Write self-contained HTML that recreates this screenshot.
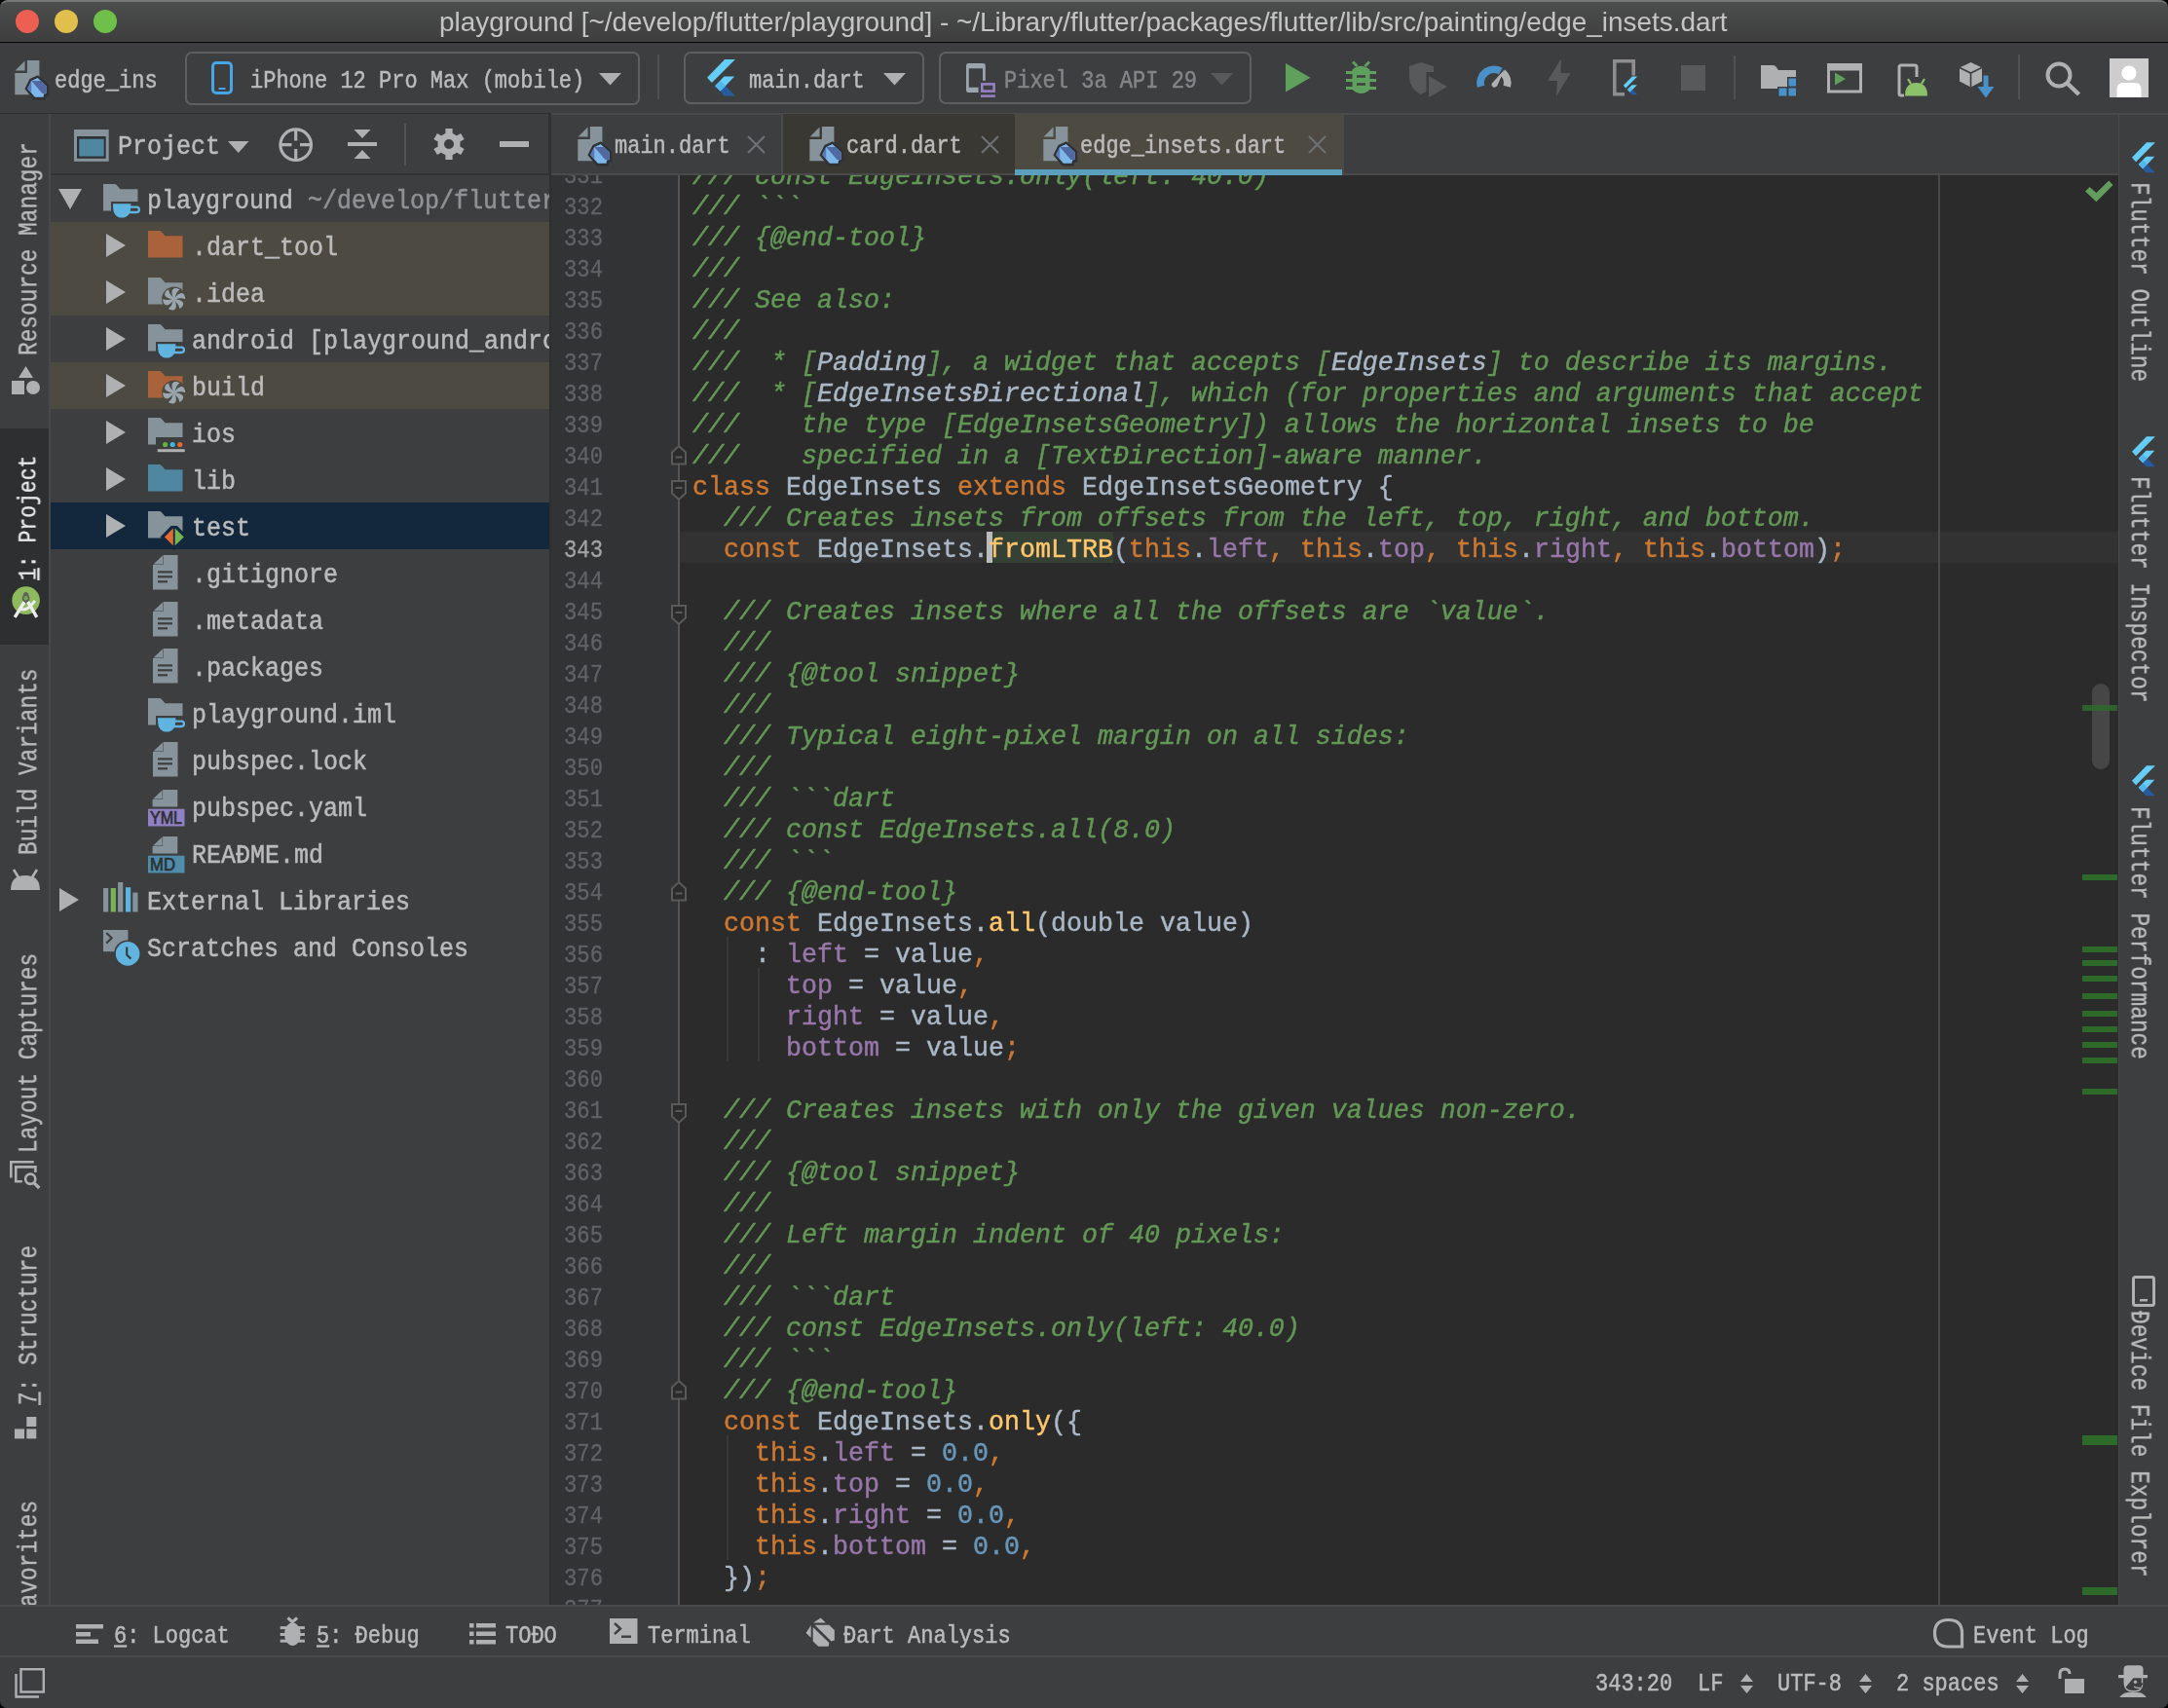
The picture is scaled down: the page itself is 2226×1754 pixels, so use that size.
<!DOCTYPE html>
<html><head><meta charset="utf-8">
<style>
*{margin:0;padding:0;box-sizing:border-box}
html,body{width:2226px;height:1754px;overflow:hidden;background:#000}
body{position:relative;font-family:"Liberation Mono",monospace;color:#BBBBBB}
.t,.cl,.ln,.vt{will-change:transform}
.a{position:absolute}
.t{position:absolute;white-space:pre;line-height:1}
svg{position:absolute;overflow:visible}
/* title */
#title{left:0;top:0;width:2226px;height:43px;background:linear-gradient(#4C4D4D,#3E3E3E);border-top:2px solid #767676;border-radius:8px 8px 0 0}
#titleline{left:0;top:42.5px;width:2226px;height:1.5px;background:#050505}
.tl{position:absolute;top:10px;width:24px;height:24px;border-radius:50%}
/* toolbar */
#toolbar{left:0;top:44px;width:2226px;height:72px;background:#3D3E40}
#tbline{left:0;top:116px;width:566px;height:2px;background:#2E2F31}
.combo{position:absolute;border:2px solid #5E6060;border-radius:7px}
.sep{position:absolute;width:2px;background:#515151}
/* strips */
#lstrip{left:0;top:117px;width:50px;height:1531px;background:#3D3E40}
#lstripb{left:50px;top:117px;width:2px;height:1531px;background:#47494B}
#rstrip{left:2175px;top:117px;width:51px;height:1531px;background:#3D3E40}
#rstripb{left:2174px;top:117px;width:2px;height:1531px;background:#47494B}
.vt{position:absolute;white-space:pre;font-size:22.8px;line-height:1;color:#BBBBBB;-webkit-text-stroke:0.3px currentColor}
/* project panel */
#proj{left:52px;top:117px;width:512px;height:1531px;background:#3D3E40;overflow:hidden}
#projhdr{left:0;top:0;width:512px;height:61px;background:#3D3E40}
#projhdrb{left:0;top:61px;width:512px;height:2px;background:#323232}
.row{position:absolute;left:0;width:512px;height:48px}
.row .t{font-size:25px;top:13px;color:#BBBBBB}
.tr{font-size:25px;color:#BBBBBB;transform-origin:0 19px;transform:scaleY(1.1);-webkit-text-stroke:0.5px currentColor}
/* editor */
#tabs{left:564px;top:117px;width:1611px;height:61px;background:#3D3E40}
#tabsb{left:566px;top:178px;width:1609px;height:2px;background:#4A4A4A}
#editor{left:564px;top:180px;width:1611px;height:1468px;background:#2B2B2B;overflow:hidden}
#gutter{left:0;top:0;width:133px;height:1468px;background:#313335}
#foldline{left:132px;top:0;width:2px;height:1468px;background:#555555}
.ln{position:absolute;left:15px;width:60px;font-size:22.2px;color:#606366;white-space:pre;line-height:1;transform-origin:0 16px;transform:scaleY(1.15);-webkit-text-stroke:0.3px currentColor}
.cl{position:absolute;left:147px;white-space:pre;font-size:26.667px;line-height:1;color:#A9B7C6;transform-origin:0 20px;transform:scaleY(1.04);-webkit-text-stroke:0.45px currentColor}
.c{color:#629755;font-style:italic}
.cr{color:#A9B7C6;font-style:italic}
.k{color:#CC7832}
.f{color:#FFC66D}
.p{color:#9876AA}
.n{color:#6897BB}
/* bottom */
#bstripb{left:0;top:1648px;width:2226px;height:2px;background:#47494B}
#bstrip{left:0;top:1650px;width:2226px;height:50px;background:#3D3E40}
#statusb{left:0;top:1700px;width:2226px;height:2px;background:#47494B}
#status{left:0;top:1702px;width:2226px;height:52px;background:#3D3E40;border-radius:0 0 7px 7px}
.ui{font-size:22px;color:#BBBBBB;transform-origin:0 16px;transform:scaleY(1.17);-webkit-text-stroke:0.45px currentColor}
</style></head>
<body>
<div id="title" class="a"></div>
<div id="titleline" class="a"></div>
<div class="tl" style="left:16px;background:#EE5F53"></div>
<div class="tl" style="left:56px;background:#E0BF4C"></div>
<div class="tl" style="left:96px;background:#6FBF4B"></div>
<div class="t" id="ttext" style="left:451px;top:9px;font-family:'Liberation Sans';font-size:27.9px;color:#C4C4C4">playground [~/develop/flutter/playground] - ~/Library/flutter/packages/flutter/lib/src/painting/edge_insets.dart</div>

<div id="toolbar" class="a"></div>
<div id="tbline" class="a"></div>
<!--TOOLBAR-->
<svg style="left:15px;top:62px" width="36" height="41" viewBox="0 0 36 41"><use href="#darticon"/></svg>
<div class="t ui" style="left:56px;top:74px">edge_ins</div>
<div class="combo" style="left:190px;top:53px;width:467px;height:55px"></div>
<svg style="left:217px;top:62.6px" width="22" height="34" viewBox="0 0 22 34"><rect x="1.5" y="1.5" width="19" height="31" rx="3.5" fill="none" stroke="#47A6E6" stroke-width="3"/><rect x="7.5" y="27" width="7" height="2" fill="#47A6E6"/></svg>
<div class="t ui" style="left:257px;top:74px">iPhone 12 Pro Max (mobile)</div>
<svg style="left:615px;top:74.6px" width="23" height="13" viewBox="0 0 23 13"><path d="M0 0H23L11.5 12.5Z" fill="#AEB0B2"/></svg>
<div class="sep" style="left:675px;top:56px;height:46px"></div>
<div class="combo" style="left:702px;top:53px;width:247px;height:54px"></div>
<svg style="left:726px;top:61px" width="29" height="38" viewBox="0 0 29 38"><use href="#fluttericon"/></svg>
<div class="t ui" style="left:769px;top:74px">main.dart</div>
<svg style="left:907px;top:74.6px" width="23" height="13" viewBox="0 0 23 13"><path d="M0 0H23L11.5 12.5Z" fill="#AEB0B2"/></svg>
<div class="combo" style="left:964px;top:53px;width:321px;height:54px"></div>
<svg style="left:992px;top:65px" width="31" height="36" viewBox="0 0 31 36"><path d="M12.6 30H2.5Q0 30 0 27.5V2.5Q0 0 2.5 0H17.3Q19.8 0 19.8 2.5V17.8H17V5.2H2.8V24.8H12.6Z" fill="#9AA5AD"/><rect x="16.3" y="21.4" width="12.3" height="7.2" fill="none" stroke="#9580C4" stroke-width="2.6"/><rect x="15" y="32.4" width="14.9" height="2.5" fill="#9580C4"/></svg>
<div class="t ui" style="left:1031px;top:74px;color:#838587">Pixel 3a API 29</div>
<svg style="left:1243px;top:74.6px" width="23" height="13" viewBox="0 0 23 13"><path d="M0 0H23L11.5 12.5Z" fill="#58595B"/></svg>
<svg style="left:1320px;top:65px" width="26" height="30" viewBox="0 0 26 30"><path d="M0 0L25.4 14.8L0 29.6Z" fill="#60A05D"/></svg>
<svg style="left:1382px;top:62.5px" width="31" height="35" viewBox="0 0 31 35"><path d="M7 0.5L11.5 5M24 0.5L19.5 5" stroke="#60A05D" stroke-width="3"/><path d="M6.5 8.5Q15.5 1 24.5 8.5V29Q15.5 37 6.5 29Z" fill="#60A05D"/><path d="M0 11.5H31M0 19.5H31M0 27.5H31" stroke="#60A05D" stroke-width="3"/><path d="M11 15.5H20M11 23.5H20" stroke="#3D3E40" stroke-width="2.6"/></svg>
<svg style="left:1447px;top:64px" width="39" height="37" viewBox="0 0 39 37"><path d="M0 4L12 0L25 4V10H17.5V30L12 33Q0 27 0 15Z" fill="#58595B"/><path d="M20 14L39 25L20 36Z" fill="#58595B"/></svg>
<svg style="left:1515px;top:67px" width="37" height="25" viewBox="0 0 37 25"><path d="M5.52 21.68A13.85 13.85 0 0 1 25.8 6.1" fill="none" stroke="#4A90C9" stroke-width="7.7"/><path d="M27.8 7.5A13.85 13.85 0 0 1 32.28 21.68" fill="none" stroke="#AEB0B2" stroke-width="7.7"/><path d="M16.5 19L29.5 4.5L22.3 21Q20.5 23.5 18 22.5Q16 21.5 16.5 19Z" fill="#AEB0B2"/></svg>
<svg style="left:1589px;top:60px" width="24" height="39" viewBox="0 0 24 39"><path d="M14 0L0 23H10L9 39L23.5 15H13.5Z" fill="#58595B"/></svg>
<svg style="left:1656px;top:61px" width="26" height="38" viewBox="0 0 26 38"><path d="M12 35.8H1.8V1.8H21.2V16.5" fill="none" stroke="#8E8E8E" stroke-width="3.6"/><g transform="translate(10.8 17.4) scale(0.5)"><use href="#fluttericon"/></g></svg>
<div class="a" style="left:1725.5px;top:67px;width:25.5px;height:26px;background:#58595B"></div>
<div class="sep" style="left:1780px;top:56.7px;height:45px"></div>
<svg style="left:1808px;top:67px" width="37" height="32" viewBox="0 0 37 32"><path d="M0 0H12Q14 0 15 1L18 5H36V12H27V22H17V24H0Z" fill="#AEB0B2"/><rect x="28.5" y="13.5" width="7.5" height="8" fill="#4A90C9"/><rect x="18.5" y="23.5" width="8" height="8" fill="#4A90C9"/><rect x="28.5" y="23.5" width="7.5" height="8" fill="#4A90C9"/><path d="M19 13H37" stroke="#3D3E40" stroke-width="0"/></svg>
<svg style="left:1876px;top:64.6px" width="37" height="31" viewBox="0 0 37 31"><rect x="1.5" y="1.5" width="33" height="27.5" fill="none" stroke="#AEB0B2" stroke-width="3"/><rect x="1.5" y="1.5" width="33" height="6" fill="#AEB0B2"/><path d="M8 9.5L19 16L8 22.5Z" fill="#60A05D"/></svg>
<svg style="left:1948px;top:64.6px" width="32" height="34" viewBox="0 0 32 34"><path d="M7 33H4Q2 33 2 31V4Q2 2 4 2H18Q20 2 20 4V14" fill="none" stroke="#AEB0B2" stroke-width="3"/><path d="M8 33.5Q8 20 19.5 20Q31 20 31 33.5Z" fill="#8BC269"/><path d="M11 16L14 21M28 16L25 21" stroke="#8BC269" stroke-width="2.2"/></svg>
<svg style="left:2012px;top:63.5px" width="39" height="37" viewBox="0 0 39 37"><path d="M11.5 0L23 5.5V19.5L11.5 25.5L0 19.5V5.5Z" fill="#AEB0B2"/><path d="M0 5.5L11.5 11L23 5.5M11.5 11V25.5" fill="none" stroke="#3D3E40" stroke-width="1.6"/><rect x="24.5" y="13.5" width="5" height="14" fill="#4A90C9"/><path d="M18.5 25H35.5L27 36.5Z" fill="#4A90C9"/></svg>
<div class="sep" style="left:2072px;top:56px;height:46px"></div>
<svg style="left:2100px;top:62.5px" width="37" height="36" viewBox="0 0 37 36"><circle cx="14" cy="14" r="11.5" fill="none" stroke="#AEB0B2" stroke-width="4"/><path d="M22 22L34.5 34" stroke="#AEB0B2" stroke-width="4.5"/></svg>
<svg style="left:2165.7px;top:59.8px" width="40" height="40" viewBox="0 0 40 40"><rect width="40" height="40" fill="#CDCDCD"/><circle cx="20" cy="15" r="7.6" fill="#FFFFFF"/><path d="M7.5 40V32Q7.5 25 14 25H26Q32.5 25 32.5 32V40Z" fill="#FFFFFF"/></svg>
<!--/TOOLBAR-->

<div id="lstrip" class="a"></div>
<div id="lstripb" class="a"></div>
<div id="rstrip" class="a"></div>
<div id="rstripb" class="a"></div>

<div id="proj" class="a">
  <div id="projhdr" class="a"></div>
  <div id="projhdrb" class="a"></div>
<!--HDR-->
<svg style="left:24px;top:16px" width="36" height="33" viewBox="0 0 36 33"><rect x="0" y="0" width="35.7" height="32.8" fill="#87939A"/><rect x="3" y="7" width="29.7" height="22.8" fill="#2E3235"/><rect x="5.3" y="9.7" width="25.4" height="17.8" fill="#4F87A0"/></svg>
<div class="t tr" style="left:69px;top:22px">Project</div>
<svg style="left:181.5px;top:28px" width="22" height="12" viewBox="0 0 22 12"><path d="M0 0H21.5L10.75 12Z" fill="#AEB0B2"/></svg>
<svg style="left:234px;top:13.6px" width="36" height="36" viewBox="0 0 36 36"><circle cx="17.7" cy="17.7" r="15.8" fill="none" stroke="#AEB0B2" stroke-width="3.2"/><path d="M17.7 2V13.5M17.7 22V33.5M2 17.7H13.5M22 17.7H33.5" stroke="#AEB0B2" stroke-width="3.2"/></svg>
<svg style="left:305px;top:16px" width="30" height="30" viewBox="0 0 30 30"><path d="M6.5 0H23.5L15 9Z M6.5 30H23.5L15 21Z" fill="#AEB0B2"/><rect x="0" y="13" width="30" height="4" fill="#AEB0B2"/></svg>
<div class="a" style="left:362.5px;top:9.6px;width:2px;height:43px;background:#515355"></div>
<svg style="left:392.6px;top:14.8px" width="32" height="32" viewBox="-16 -16 32 32"><g fill="#AEB0B2"><rect x="-3.6" y="-16" width="7.2" height="8" transform="rotate(0)"/><rect x="-3.6" y="-16" width="7.2" height="8" transform="rotate(60)"/><rect x="-3.6" y="-16" width="7.2" height="8" transform="rotate(120)"/><rect x="-3.6" y="-16" width="7.2" height="8" transform="rotate(180)"/><rect x="-3.6" y="-16" width="7.2" height="8" transform="rotate(240)"/><rect x="-3.6" y="-16" width="7.2" height="8" transform="rotate(300)"/><circle r="11.5"/></g><circle r="5" fill="#3D3E40"/></svg>
<div class="a" style="left:461px;top:28px;width:30px;height:6px;background:#AEB0B2"></div>
<!--/HDR-->
<!--PROJ-->
<svg style="left:8.0px;top:77.0px" width="24" height="21" viewBox="0 0 24 21"><path d="M0 0H24L12 21Z" fill="#AEB0B2"/></svg>
<svg style="left:54.0px;top:72.2px" width="38" height="36" viewBox="0 0 38 36"><path d="M0 0H11.5Q13 0 14 1.2L17.5 5.2H35.5V27.5H0Z" fill="#87939A"/><rect x="8" y="18" width="30" height="20" fill="#3D3E40"/><path d="M10 20.3H28.3V22Q28.3 34.6 19.15 34.6Q10 34.6 10 22Z" fill="#5FB4E0"/><path d="M26.5 23.6H34.3Q36.9 23.6 36.9 26.3Q36.9 29 34.3 29H26.5" fill="none" stroke="#5FB4E0" stroke-width="2.3"/></svg>
<div class="t tr" style="left:99px;top:78px">playground<span style="color:#8F9193"> ~/develop/flutter/playground</span></div>
<div class="a" style="left:0;top:111px;width:512px;height:48px;background:#4D4A42"></div>
<svg style="left:56.0px;top:123.0px" width="22" height="24" viewBox="0 0 22 24"><path d="M1 0L21 12L1 24Z" fill="#AEB0B2"/></svg>
<svg style="left:100.0px;top:120.0px" width="38" height="30" viewBox="0 0 38 30"><path d="M0 0H11.5Q13 0 14 1.2L17.5 5.2H35.5V27.5H0Z" fill="#AA623A"/></svg>
<div class="t tr" style="left:145px;top:126px">.dart_tool</div>
<div class="a" style="left:0;top:159px;width:512px;height:48px;background:#4D4A42"></div>
<svg style="left:56.0px;top:171.0px" width="22" height="24" viewBox="0 0 22 24"><path d="M1 0L21 12L1 24Z" fill="#AEB0B2"/></svg>
<svg style="left:100.0px;top:168.0px" width="38" height="36" viewBox="0 0 38 36"><path d="M0 0H11.5Q13 0 14 1.2L17.5 5.2H35.5V27.5H0Z" fill="#87939A"/><circle cx="26.7" cy="22.2" r="12.6" fill="#4D4A42"/><g transform="translate(26.7 22.2) scale(1.12)"><path d="M0 0C-2.5 -4 -2.5 -8.5 -0.5 -9.6C1.5 -10.5 4 -9.8 5.2 -8.7C3 -7.5 1.5 -5 0.8 -0.3Z" transform="rotate(0)" fill="#9AA7B0"/><path d="M0 0C-2.5 -4 -2.5 -8.5 -0.5 -9.6C1.5 -10.5 4 -9.8 5.2 -8.7C3 -7.5 1.5 -5 0.8 -0.3Z" transform="rotate(60)" fill="#9AA7B0"/><path d="M0 0C-2.5 -4 -2.5 -8.5 -0.5 -9.6C1.5 -10.5 4 -9.8 5.2 -8.7C3 -7.5 1.5 -5 0.8 -0.3Z" transform="rotate(120)" fill="#9AA7B0"/><path d="M0 0C-2.5 -4 -2.5 -8.5 -0.5 -9.6C1.5 -10.5 4 -9.8 5.2 -8.7C3 -7.5 1.5 -5 0.8 -0.3Z" transform="rotate(180)" fill="#9AA7B0"/><path d="M0 0C-2.5 -4 -2.5 -8.5 -0.5 -9.6C1.5 -10.5 4 -9.8 5.2 -8.7C3 -7.5 1.5 -5 0.8 -0.3Z" transform="rotate(240)" fill="#9AA7B0"/><path d="M0 0C-2.5 -4 -2.5 -8.5 -0.5 -9.6C1.5 -10.5 4 -9.8 5.2 -8.7C3 -7.5 1.5 -5 0.8 -0.3Z" transform="rotate(300)" fill="#9AA7B0"/></g></svg>
<div class="t tr" style="left:145px;top:174px">.idea</div>
<svg style="left:56.0px;top:219.0px" width="22" height="24" viewBox="0 0 22 24"><path d="M1 0L21 12L1 24Z" fill="#AEB0B2"/></svg>
<svg style="left:100.0px;top:216.2px" width="38" height="36" viewBox="0 0 38 36"><path d="M0 0H11.5Q13 0 14 1.2L17.5 5.2H35.5V27.5H0Z" fill="#87939A"/><rect x="8" y="18" width="30" height="20" fill="#3D3E40"/><path d="M10 20.3H28.3V22Q28.3 34.6 19.15 34.6Q10 34.6 10 22Z" fill="#5FB4E0"/><path d="M26.5 23.6H34.3Q36.9 23.6 36.9 26.3Q36.9 29 34.3 29H26.5" fill="none" stroke="#5FB4E0" stroke-width="2.3"/></svg>
<div class="t tr" style="left:145px;top:222px">android [playground_android]</div>
<div class="a" style="left:0;top:255px;width:512px;height:48px;background:#4D4A42"></div>
<svg style="left:56.0px;top:267.0px" width="22" height="24" viewBox="0 0 22 24"><path d="M1 0L21 12L1 24Z" fill="#AEB0B2"/></svg>
<svg style="left:100.0px;top:264.0px" width="38" height="36" viewBox="0 0 38 36"><path d="M0 0H11.5Q13 0 14 1.2L17.5 5.2H35.5V27.5H0Z" fill="#AA623A"/><circle cx="26.7" cy="22.2" r="12.6" fill="#4D4A42"/><g transform="translate(26.7 22.2) scale(1.12)"><path d="M0 0C-2.5 -4 -2.5 -8.5 -0.5 -9.6C1.5 -10.5 4 -9.8 5.2 -8.7C3 -7.5 1.5 -5 0.8 -0.3Z" transform="rotate(0)" fill="#9AA7B0"/><path d="M0 0C-2.5 -4 -2.5 -8.5 -0.5 -9.6C1.5 -10.5 4 -9.8 5.2 -8.7C3 -7.5 1.5 -5 0.8 -0.3Z" transform="rotate(60)" fill="#9AA7B0"/><path d="M0 0C-2.5 -4 -2.5 -8.5 -0.5 -9.6C1.5 -10.5 4 -9.8 5.2 -8.7C3 -7.5 1.5 -5 0.8 -0.3Z" transform="rotate(120)" fill="#9AA7B0"/><path d="M0 0C-2.5 -4 -2.5 -8.5 -0.5 -9.6C1.5 -10.5 4 -9.8 5.2 -8.7C3 -7.5 1.5 -5 0.8 -0.3Z" transform="rotate(180)" fill="#9AA7B0"/><path d="M0 0C-2.5 -4 -2.5 -8.5 -0.5 -9.6C1.5 -10.5 4 -9.8 5.2 -8.7C3 -7.5 1.5 -5 0.8 -0.3Z" transform="rotate(240)" fill="#9AA7B0"/><path d="M0 0C-2.5 -4 -2.5 -8.5 -0.5 -9.6C1.5 -10.5 4 -9.8 5.2 -8.7C3 -7.5 1.5 -5 0.8 -0.3Z" transform="rotate(300)" fill="#9AA7B0"/></g></svg>
<div class="t tr" style="left:145px;top:270px">build</div>
<svg style="left:56.0px;top:315.0px" width="22" height="24" viewBox="0 0 22 24"><path d="M1 0L21 12L1 24Z" fill="#AEB0B2"/></svg>
<svg style="left:100.0px;top:312.0px" width="38" height="36" viewBox="0 0 38 36"><path d="M0 0H11.5Q13 0 14 1.2L17.5 5.2H35.5V27.5H0Z" fill="#87939A"/><path d="M8 20H38V30H8Z" fill="#3D3E40"/><circle cx="17.6" cy="27.5" r="2.6" fill="#62B543"/><circle cx="25.2" cy="27.5" r="2.6" fill="#40B6E0"/><circle cx="32.8" cy="27.5" r="2.6" fill="#E46A2C"/><rect x="9.7" y="32.2" width="28" height="3" fill="#AEB0B2"/></svg>
<div class="t tr" style="left:145px;top:318px">ios</div>
<svg style="left:56.0px;top:363.0px" width="22" height="24" viewBox="0 0 22 24"><path d="M1 0L21 12L1 24Z" fill="#AEB0B2"/></svg>
<svg style="left:100.0px;top:360.0px" width="38" height="30" viewBox="0 0 38 30"><path d="M0 0H11.5Q13 0 14 1.2L17.5 5.2H35.5V27.5H0Z" fill="#4F87A0"/></svg>
<div class="t tr" style="left:145px;top:366px">lib</div>
<div class="a" style="left:0;top:399px;width:512px;height:48px;background:#13283D"></div>
<svg style="left:56.0px;top:411.0px" width="22" height="24" viewBox="0 0 22 24"><path d="M1 0L21 12L1 24Z" fill="#AEB0B2"/></svg>
<svg style="left:100.0px;top:408.0px" width="38" height="38" viewBox="0 0 38 38"><path d="M0 0H11.5Q13 0 14 1.2L17.5 5.2H35.5V27.5H0Z" fill="#87939A"/><path d="M12.5 26.4L23.6 15H29.9L41 26.4L26.75 40Z" fill="#13283D"/><path d="M16.9 26.4L25.8 17.5V35.3Z" fill="#E46A34"/><path d="M27.7 17.5L36.8 26.4L27.7 35.3Z" fill="#75B553"/></svg>
<div class="t tr" style="left:145px;top:414px">test</div>
<svg style="left:105.0px;top:453.0px" width="26" height="36" viewBox="0 0 26 36"><path d="M10.5 0H25.5V35.5H0V10H10.5Z" fill="#87939A"/><path d="M0.5 9.5L10 0.5V9.5Z" fill="#87939A"/><path d="M12 8.5H10.5V11.5H0V10" fill="none"/><rect x="5" y="16.3" width="15" height="2.2" fill="#3D3E40"/><rect x="5" y="21.2" width="15" height="2.2" fill="#3D3E40"/><rect x="5" y="26.2" width="10" height="2.2" fill="#3D3E40"/></svg>
<div class="t tr" style="left:145px;top:462px">.gitignore</div>
<svg style="left:105.0px;top:501.0px" width="26" height="36" viewBox="0 0 26 36"><path d="M10.5 0H25.5V35.5H0V10H10.5Z" fill="#87939A"/><path d="M0.5 9.5L10 0.5V9.5Z" fill="#87939A"/><path d="M12 8.5H10.5V11.5H0V10" fill="none"/><rect x="5" y="16.3" width="15" height="2.2" fill="#3D3E40"/><rect x="5" y="21.2" width="15" height="2.2" fill="#3D3E40"/><rect x="5" y="26.2" width="10" height="2.2" fill="#3D3E40"/></svg>
<div class="t tr" style="left:145px;top:510px">.metadata</div>
<svg style="left:105.0px;top:549.0px" width="26" height="36" viewBox="0 0 26 36"><path d="M10.5 0H25.5V35.5H0V10H10.5Z" fill="#87939A"/><path d="M0.5 9.5L10 0.5V9.5Z" fill="#87939A"/><path d="M12 8.5H10.5V11.5H0V10" fill="none"/><rect x="5" y="16.3" width="15" height="2.2" fill="#3D3E40"/><rect x="5" y="21.2" width="15" height="2.2" fill="#3D3E40"/><rect x="5" y="26.2" width="10" height="2.2" fill="#3D3E40"/></svg>
<div class="t tr" style="left:145px;top:558px">.packages</div>
<svg style="left:100.0px;top:600.2px" width="38" height="36" viewBox="0 0 38 36"><path d="M0 0H11.5Q13 0 14 1.2L17.5 5.2H35.5V27.5H0Z" fill="#87939A"/><rect x="8" y="18" width="30" height="20" fill="#3D3E40"/><path d="M10 20.3H28.3V22Q28.3 34.6 19.15 34.6Q10 34.6 10 22Z" fill="#5FB4E0"/><path d="M26.5 23.6H34.3Q36.9 23.6 36.9 26.3Q36.9 29 34.3 29H26.5" fill="none" stroke="#5FB4E0" stroke-width="2.3"/></svg>
<div class="t tr" style="left:145px;top:606px">playground.iml</div>
<svg style="left:105.0px;top:645.0px" width="26" height="36" viewBox="0 0 26 36"><path d="M10.5 0H25.5V35.5H0V10H10.5Z" fill="#87939A"/><path d="M0.5 9.5L10 0.5V9.5Z" fill="#87939A"/><path d="M12 8.5H10.5V11.5H0V10" fill="none"/><rect x="5" y="16.3" width="15" height="2.2" fill="#3D3E40"/><rect x="5" y="21.2" width="15" height="2.2" fill="#3D3E40"/><rect x="5" y="26.2" width="10" height="2.2" fill="#3D3E40"/></svg>
<div class="t tr" style="left:145px;top:654px">pubspec.lock</div>
<svg style="left:100.4px;top:693.5px" width="38" height="38" viewBox="0 0 38 38"><path d="M15.1 0H30.3V17.4H4.6V10H15.1Z" fill="#87939A"/><path d="M5.1 9.5L14.6 0.5V9.5Z" fill="#87939A"/><rect x="0" y="19.7" width="37.5" height="17.8" fill="#9280C4"/><text x="2" y="34.6" font-family="Liberation Sans" font-size="17.5" fill="#2E3135" stroke="#2E3135" stroke-width="0.7" textLength="33" lengthAdjust="spacingAndGlyphs">YML</text></svg>
<div class="t tr" style="left:145px;top:702px">pubspec.yaml</div>
<svg style="left:100.4px;top:741.5px" width="38" height="38" viewBox="0 0 38 38"><path d="M15.1 0H30.3V17.4H4.6V10H15.1Z" fill="#87939A"/><path d="M5.1 9.5L14.6 0.5V9.5Z" fill="#87939A"/><rect x="0" y="19.7" width="37.5" height="17.8" fill="#4F8BAA"/><text x="2" y="34.6" font-family="Liberation Sans" font-size="17.5" fill="#2E3135" stroke="#2E3135" stroke-width="0.7" textLength="26" lengthAdjust="spacingAndGlyphs">MD</text></svg>
<div class="t tr" style="left:145px;top:750px">REAĐME.md</div>
<svg style="left:8.0px;top:795.0px" width="22" height="24" viewBox="0 0 22 24"><path d="M1 0L21 12L1 24Z" fill="#AEB0B2"/></svg>
<svg style="left:54.0px;top:789.0px" width="36" height="31" viewBox="0 0 36 31"><rect x="0" y="6" width="5.2" height="24.5" fill="#87939A"/><rect x="7.7" y="6" width="5.2" height="24.5" fill="#76B455"/><rect x="15.1" y="0" width="5.2" height="30.5" fill="#87939A"/><rect x="23" y="5.2" width="5.2" height="25.3" fill="#5AB5E3"/><rect x="30.3" y="10.6" width="5.2" height="19.9" fill="#87939A"/></svg>
<div class="t tr" style="left:99px;top:798px">External Libraries</div>
<svg style="left:54.0px;top:837.6px" width="40" height="40" viewBox="0 0 40 40"><rect x="0" y="0" width="25.4" height="22.2" fill="#87939A"/><path d="M3.2 3L8.7 8.3L3.2 13.6" fill="none" stroke="#3D3E40" stroke-width="2.2"/><circle cx="25.1" cy="24.4" r="14" fill="#3D3E40"/><circle cx="25.1" cy="24.4" r="12.3" fill="#5FB4E0"/><path d="M24.2 17.5V25.5L28.4 29.6" fill="none" stroke="#3D3E40" stroke-width="2.2"/></svg>
<div class="t tr" style="left:99px;top:846px">Scratches and Consoles</div>
<!--/PROJ-->
</div>

<div id="tabs" class="a"></div>
<div id="tabsb" class="a"></div>
<div id="editor" class="a">
  <div id="gutter" class="a"></div>
  <div id="foldline" class="a"></div>
<div class="a" style="left:134px;top:366px;width:1477px;height:32px;background:#323232"></div>
<div class="a" style="left:455px;top:366px;width:124px;height:32px;background:#344134"></div>
<div class="a" style="left:449px;top:366px;width:6px;height:32px;background:#BBBBBB"></div>
<div class="a" style="left:1426px;top:0;width:2px;height:1468px;background:#4A4A4A"></div>
<div class="a" style="left:182px;top:782px;width:2px;height:128px;background:#393939"></div>
<div class="a" style="left:214px;top:814px;width:2px;height:96px;background:#393939"></div>
<div class="a" style="left:182px;top:1294px;width:2px;height:128px;background:#393939"></div>
<!--FOLDS-->
<svg style="left:125px;top:277px" width="16" height="21" viewBox="0 0 16 21"><path d="M8 1L15 7.5V19.5H1V7.5Z" fill="#2B2B2B" stroke="#5A5A5A" stroke-width="2"/><rect x="4.5" y="11.5" width="7" height="2" fill="#5A5A5A"/></svg>
<svg style="left:125px;top:313px" width="16" height="21" viewBox="0 0 16 21"><path d="M1 1H15V13.5L8 20L1 13.5Z" fill="#2B2B2B" stroke="#5A5A5A" stroke-width="2"/><rect x="4.5" y="7" width="7" height="2" fill="#5A5A5A"/></svg>
<svg style="left:125px;top:441px" width="16" height="21" viewBox="0 0 16 21"><path d="M1 1H15V13.5L8 20L1 13.5Z" fill="#2B2B2B" stroke="#5A5A5A" stroke-width="2"/><rect x="4.5" y="7" width="7" height="2" fill="#5A5A5A"/></svg>
<svg style="left:125px;top:725px" width="16" height="21" viewBox="0 0 16 21"><path d="M8 1L15 7.5V19.5H1V7.5Z" fill="#2B2B2B" stroke="#5A5A5A" stroke-width="2"/><rect x="4.5" y="11.5" width="7" height="2" fill="#5A5A5A"/></svg>
<svg style="left:125px;top:953px" width="16" height="21" viewBox="0 0 16 21"><path d="M1 1H15V13.5L8 20L1 13.5Z" fill="#2B2B2B" stroke="#5A5A5A" stroke-width="2"/><rect x="4.5" y="7" width="7" height="2" fill="#5A5A5A"/></svg>
<svg style="left:125px;top:1237px" width="16" height="21" viewBox="0 0 16 21"><path d="M8 1L15 7.5V19.5H1V7.5Z" fill="#2B2B2B" stroke="#5A5A5A" stroke-width="2"/><rect x="4.5" y="11.5" width="7" height="2" fill="#5A5A5A"/></svg>
<!--/FOLDS-->
<!--CODE-->
<div class="cl" style="top:-11.00px"><span class="c">/// const EdgeInsets.only(left: 40.0)</span></div>
<div class="ln" style="top:-8.00px">331</div>
<div class="cl" style="top:20.00px"><span class="c">/// ```</span></div>
<div class="ln" style="top:24.00px">332</div>
<div class="cl" style="top:52.00px"><span class="c">/// {@end-tool}</span></div>
<div class="ln" style="top:56.00px">333</div>
<div class="cl" style="top:84.00px"><span class="c">///</span></div>
<div class="ln" style="top:88.00px">334</div>
<div class="cl" style="top:116.00px"><span class="c">/// See also:</span></div>
<div class="ln" style="top:120.00px">335</div>
<div class="cl" style="top:148.00px"><span class="c">///</span></div>
<div class="ln" style="top:152.00px">336</div>
<div class="cl" style="top:180.00px"><span class="c">///  * [</span><span class="cr">Padding</span><span class="c">], a widget that accepts [</span><span class="cr">EdgeInsets</span><span class="c">] to describe its margins.</span></div>
<div class="ln" style="top:184.00px">337</div>
<div class="cl" style="top:212.00px"><span class="c">///  * [</span><span class="cr">EdgeInsetsĐirectional</span><span class="c">], which (for properties and arguments that accept</span></div>
<div class="ln" style="top:216.00px">338</div>
<div class="cl" style="top:244.00px"><span class="c">///    the type [EdgeInsetsGeometry]) allows the horizontal insets to be</span></div>
<div class="ln" style="top:248.00px">339</div>
<div class="cl" style="top:276.00px"><span class="c">///    specified in a [TextĐirection]-aware manner.</span></div>
<div class="ln" style="top:280.00px">340</div>
<div class="cl" style="top:308.00px"><span class="k">class</span> EdgeInsets <span class="k">extends</span> EdgeInsetsGeometry {</div>
<div class="ln" style="top:312.00px">341</div>
<div class="cl" style="top:340.00px">  <span class="c">/// Creates insets from offsets from the left, top, right, and bottom.</span></div>
<div class="ln" style="top:344.00px">342</div>
<div class="cl" style="top:372.00px">  <span class="k">const</span> EdgeInsets.<span class="f">fromLTRB</span>(<span class="k">this</span>.<span class="p">left</span><span class="k">,</span> <span class="k">this</span>.<span class="p">top</span><span class="k">,</span> <span class="k">this</span>.<span class="p">right</span><span class="k">,</span> <span class="k">this</span>.<span class="p">bottom</span>)<span class="k">;</span></div>
<div class="ln" style="top:376.00px;color:#A4A3A3">343</div>
<div class="ln" style="top:408.00px">344</div>
<div class="cl" style="top:436.00px">  <span class="c">/// Creates insets where all the offsets are `value`.</span></div>
<div class="ln" style="top:440.00px">345</div>
<div class="cl" style="top:468.00px">  <span class="c">///</span></div>
<div class="ln" style="top:472.00px">346</div>
<div class="cl" style="top:500.00px">  <span class="c">/// {@tool snippet}</span></div>
<div class="ln" style="top:504.00px">347</div>
<div class="cl" style="top:532.00px">  <span class="c">///</span></div>
<div class="ln" style="top:536.00px">348</div>
<div class="cl" style="top:564.00px">  <span class="c">/// Typical eight-pixel margin on all sides:</span></div>
<div class="ln" style="top:568.00px">349</div>
<div class="cl" style="top:596.00px">  <span class="c">///</span></div>
<div class="ln" style="top:600.00px">350</div>
<div class="cl" style="top:628.00px">  <span class="c">/// ```dart</span></div>
<div class="ln" style="top:632.00px">351</div>
<div class="cl" style="top:660.00px">  <span class="c">/// const EdgeInsets.all(8.0)</span></div>
<div class="ln" style="top:664.00px">352</div>
<div class="cl" style="top:692.00px">  <span class="c">/// ```</span></div>
<div class="ln" style="top:696.00px">353</div>
<div class="cl" style="top:724.00px">  <span class="c">/// {@end-tool}</span></div>
<div class="ln" style="top:728.00px">354</div>
<div class="cl" style="top:756.00px">  <span class="k">const</span> EdgeInsets.<span class="f">all</span>(double value)</div>
<div class="ln" style="top:760.00px">355</div>
<div class="cl" style="top:788.00px">    : <span class="p">left</span> = value<span class="k">,</span></div>
<div class="ln" style="top:792.00px">356</div>
<div class="cl" style="top:820.00px">      <span class="p">top</span> = value<span class="k">,</span></div>
<div class="ln" style="top:824.00px">357</div>
<div class="cl" style="top:852.00px">      <span class="p">right</span> = value<span class="k">,</span></div>
<div class="ln" style="top:856.00px">358</div>
<div class="cl" style="top:884.00px">      <span class="p">bottom</span> = value<span class="k">;</span></div>
<div class="ln" style="top:888.00px">359</div>
<div class="ln" style="top:920.00px">360</div>
<div class="cl" style="top:948.00px">  <span class="c">/// Creates insets with only the given values non-zero.</span></div>
<div class="ln" style="top:952.00px">361</div>
<div class="cl" style="top:980.00px">  <span class="c">///</span></div>
<div class="ln" style="top:984.00px">362</div>
<div class="cl" style="top:1012.00px">  <span class="c">/// {@tool snippet}</span></div>
<div class="ln" style="top:1016.00px">363</div>
<div class="cl" style="top:1044.00px">  <span class="c">///</span></div>
<div class="ln" style="top:1048.00px">364</div>
<div class="cl" style="top:1076.00px">  <span class="c">/// Left margin indent of 40 pixels:</span></div>
<div class="ln" style="top:1080.00px">365</div>
<div class="cl" style="top:1108.00px">  <span class="c">///</span></div>
<div class="ln" style="top:1112.00px">366</div>
<div class="cl" style="top:1140.00px">  <span class="c">/// ```dart</span></div>
<div class="ln" style="top:1144.00px">367</div>
<div class="cl" style="top:1172.00px">  <span class="c">/// const EdgeInsets.only(left: 40.0)</span></div>
<div class="ln" style="top:1176.00px">368</div>
<div class="cl" style="top:1204.00px">  <span class="c">/// ```</span></div>
<div class="ln" style="top:1208.00px">369</div>
<div class="cl" style="top:1236.00px">  <span class="c">/// {@end-tool}</span></div>
<div class="ln" style="top:1240.00px">370</div>
<div class="cl" style="top:1268.00px">  <span class="k">const</span> EdgeInsets.<span class="f">only</span>({</div>
<div class="ln" style="top:1272.00px">371</div>
<div class="cl" style="top:1300.00px">    <span class="k">this</span>.<span class="p">left</span> = <span class="n">0.0</span><span class="k">,</span></div>
<div class="ln" style="top:1304.00px">372</div>
<div class="cl" style="top:1332.00px">    <span class="k">this</span>.<span class="p">top</span> = <span class="n">0.0</span><span class="k">,</span></div>
<div class="ln" style="top:1336.00px">373</div>
<div class="cl" style="top:1364.00px">    <span class="k">this</span>.<span class="p">right</span> = <span class="n">0.0</span><span class="k">,</span></div>
<div class="ln" style="top:1368.00px">374</div>
<div class="cl" style="top:1396.00px">    <span class="k">this</span>.<span class="p">bottom</span> = <span class="n">0.0</span><span class="k">,</span></div>
<div class="ln" style="top:1400.00px">375</div>
<div class="cl" style="top:1428.00px">  })<span class="k">;</span></div>
<div class="ln" style="top:1432.00px">376</div>
<div class="ln" style="top:1464.00px">377</div>
<!--/CODE-->
</div>

<div id="bstripb" class="a"></div>
<div id="bstrip" class="a"></div>
<div id="statusb" class="a"></div>
<div id="status" class="a"></div>
<!--TABS-->
<div class="a" style="left:566px;top:116px;width:1660px;height:2px;background:#4A4A4A"></div>
<div class="a" style="left:563px;top:117px;width:3px;height:63px;background:#2F3133"></div>
<div class="a" style="left:564px;top:180px;width:2px;height:1468px;background:#2F2F30"></div>
<div class="a" style="left:802px;top:117px;width:2px;height:61px;background:#4A4A4A"></div>
<div class="a" style="left:804px;top:117px;width:238px;height:61px;background:#393833"></div>
<div class="a" style="left:1042px;top:117px;width:338px;height:61px;background:#4D4A42"></div>
<div class="a" style="left:1378px;top:117px;width:2px;height:61px;background:#4A4A4A"></div>
<div class="a" style="left:1042px;top:174px;width:336px;height:6px;background:#5A9FBE"></div>
<svg style="left:593px;top:130px" width="36" height="41" viewBox="0 0 36 41"><use href="#darticon"/></svg>
<div class="t ui" style="left:631px;top:141px">main.dart</div>
<svg style="left:767px;top:139px" width="19" height="19" viewBox="0 0 19 19"><path d="M1 1L18 18M18 1L1 18" stroke="#6E7173" stroke-width="2.2"/></svg>
<svg style="left:831px;top:130px" width="36" height="41" viewBox="0 0 36 41"><use href="#darticon"/></svg>
<div class="t ui" style="left:869px;top:141px">card.dart</div>
<svg style="left:1007px;top:139px" width="19" height="19" viewBox="0 0 19 19"><path d="M1 1L18 18M18 1L1 18" stroke="#6E7173" stroke-width="2.2"/></svg>
<svg style="left:1071px;top:130px" width="36" height="41" viewBox="0 0 36 41"><use href="#darticon"/></svg>
<div class="t ui" style="left:1109px;top:141px">edge_insets.dart</div>
<svg style="left:1343px;top:139px" width="19" height="19" viewBox="0 0 19 19"><path d="M1 1L18 18M18 1L1 18" stroke="#6E7173" stroke-width="2.2"/></svg>
<!--/TABS-->
<!--EDX-->
<svg style="left:2141px;top:185px" width="30" height="23" viewBox="0 0 30 23"><path d="M0 11.4L11.4 22.2L28.6 4.9L24.2 0.5L11.4 13.1L4.5 6.9Z" fill="#629D5E"/></svg>
<div class="a" style="left:2148px;top:702px;width:18px;height:88px;border-radius:9px;background:rgba(255,255,255,0.13)"></div>
<div class="a" style="left:2138px;top:724px;width:36px;height:6px;background:#2E6A2A;opacity:.85"></div>
<div class="a" style="left:2138px;top:898px;width:36px;height:6px;background:#2E6A2A"></div>
<div class="a" style="left:2138px;top:972px;width:36px;height:6px;background:#2E6A2A"></div>
<div class="a" style="left:2138px;top:986px;width:36px;height:6px;background:#2E6A2A"></div>
<div class="a" style="left:2138px;top:1002px;width:36px;height:6px;background:#2E6A2A"></div>
<div class="a" style="left:2138px;top:1020px;width:36px;height:6px;background:#2E6A2A"></div>
<div class="a" style="left:2138px;top:1038px;width:36px;height:6px;background:#2E6A2A"></div>
<div class="a" style="left:2138px;top:1054px;width:36px;height:6px;background:#2E6A2A"></div>
<div class="a" style="left:2138px;top:1070px;width:36px;height:6px;background:#2E6A2A"></div>
<div class="a" style="left:2138px;top:1086px;width:36px;height:6px;background:#2E6A2A"></div>
<div class="a" style="left:2138px;top:1118px;width:36px;height:6px;background:#2E6A2A"></div>
<div class="a" style="left:2138px;top:1474px;width:36px;height:10px;background:#2E6A2A"></div>
<div class="a" style="left:2138px;top:1630px;width:36px;height:8px;background:#2E6A2A"></div>
<!--/EDX-->
<!--LSTRIP-->
<div class="a" style="left:0;top:117px;width:50px;height:1531px;overflow:hidden">
<div class="a" style="left:0;top:323px;width:50px;height:222px;background:#2D2F31"></div>
<div class="vt" style="left:20px;top:248px;transform-origin:0 0;transform:rotate(-90deg) translateY(16.5px) scaleY(1.2) translateY(-16.5px)">Resource Manager</div>
<svg style="left:12px;top:259px" width="29" height="30" viewBox="0 0 29 30"><path d="M14.5 0L22 12H7Z" fill="#AEB0B2"/><rect x="0" y="15" width="13" height="14" fill="#AEB0B2"/><circle cx="22" cy="22" r="7" fill="#AEB0B2"/></svg>
<div class="vt" style="left:20px;top:479px;font-size:21.4px;transform-origin:0 0;transform:rotate(-90deg) translateY(16.5px) scaleY(1.2) translateY(-16.5px);color:#E8E8E8"><span style="text-decoration:underline">1</span>: Project</div>
<svg style="left:12px;top:485px" width="30" height="34" viewBox="0 0 30 34"><circle cx="14.6" cy="14.6" r="14.3" fill="#8DBA5C"/><path d="M13.2 15.8L3.2 31.9M16.6 15.8L25.8 31.9" stroke="#EDEDED" stroke-width="3.4"/><path d="M9.4 23.4Q15.5 26.5 23.9 14.8" fill="none" stroke="#EDEDED" stroke-width="3"/><path d="M12.5 7.2Q14.6 5 16.7 7.2L18.4 11.5V14.3L14.6 17.6L10.8 14.3V11.5Z" fill="#5E5F60"/><circle cx="14.6" cy="12.3" r="2.2" fill="#7AA650"/></svg>
<div class="vt" style="left:20px;top:761px;transform-origin:0 0;transform:rotate(-90deg) translateY(16.5px) scaleY(1.2) translateY(-16.5px)">Build Variants</div>
<svg style="left:10px;top:776px" width="32" height="21" viewBox="0 0 32 21"><path d="M1 21Q1 6 16 6Q31 6 31 21Z" fill="#AEB0B2"/><path d="M4 0L9 8M28 0L23 8" stroke="#AEB0B2" stroke-width="2.6"/></svg>
<div class="vt" style="left:20px;top:1067px;transform-origin:0 0;transform:rotate(-90deg) translateY(16.5px) scaleY(1.2) translateY(-16.5px)">Layout Captures</div>
<svg style="left:0;top:1063px" width="50" height="50" viewBox="0 0 50 50"><g fill="none" stroke="#AEB0B2"><path d="M11.3 29.6V13.3H34.8" stroke-width="2.6"/><path d="M22.8 33.2H16.25V18.35H36.4V24" stroke-width="2.6"/><circle cx="31.2" cy="30.7" r="5.1" stroke-width="2.7"/><path d="M34.6 34.4L40.3 40" stroke-width="3.3"/></g></svg>
<div class="vt" style="left:20px;top:1326px;transform-origin:0 0;transform:rotate(-90deg) translateY(16.5px) scaleY(1.2) translateY(-16.5px)"><span style="text-decoration:underline">7</span>: Structure</div>
<svg style="left:15px;top:1338px" width="24" height="24" viewBox="0 0 24 24"><rect x="0" y="12.4" width="10" height="10" fill="#AEB0B2"/><rect x="12.3" y="12.4" width="10" height="10" fill="#AEB0B2"/><rect x="12.3" y="0" width="10" height="10" fill="#AEB0B2"/></svg>
<div class="vt" style="left:20px;top:1588px;transform-origin:0 0;transform:rotate(-90deg) translateY(16.5px) scaleY(1.2) translateY(-16.5px)">2: Favorites</div>
</div>
<!--/LSTRIP-->
<!--RSTRIP-->
<svg style="left:2189px;top:146px" width="24" height="32" viewBox="0 0 29 38"><use href="#fluttericon"/></svg>
<div class="vt" style="left:2206px;top:187px;transform-origin:0 0;transform:rotate(90deg) translateY(16.5px) scaleY(1.2) translateY(-16.5px)">Flutter Outline</div>
<svg style="left:2189px;top:448px" width="24" height="32" viewBox="0 0 29 38"><use href="#fluttericon"/></svg>
<div class="vt" style="left:2206px;top:489px;transform-origin:0 0;transform:rotate(90deg) translateY(16.5px) scaleY(1.2) translateY(-16.5px)">Flutter Inspector</div>
<svg style="left:2189px;top:786px" width="24" height="32" viewBox="0 0 29 38"><use href="#fluttericon"/></svg>
<div class="vt" style="left:2206px;top:828px;transform-origin:0 0;transform:rotate(90deg) translateY(16.5px) scaleY(1.2) translateY(-16.5px)">Flutter Performance</div>
<svg style="left:2189px;top:1310px" width="24" height="32" viewBox="0 0 24 32"><rect x="1.5" y="1.5" width="21" height="29" rx="2" fill="none" stroke="#AEB0B2" stroke-width="3"/><rect x="8" y="24" width="8" height="2.5" fill="#AEB0B2"/></svg>
<div class="vt" style="left:2206px;top:1346px;transform-origin:0 0;transform:rotate(90deg) translateY(16.5px) scaleY(1.2) translateY(-16.5px)">Đevice File Explorer</div>
<!--/RSTRIP-->
<!--BOTTOM-->
<svg style="left:78px;top:1667.5px" width="28" height="20" viewBox="0 0 28 20"><rect x="0" y="0" width="28" height="4.5" fill="#AEB0B2"/><rect x="0" y="8" width="15" height="4.5" fill="#AEB0B2"/><rect x="0" y="15.5" width="23" height="4.5" fill="#AEB0B2"/></svg>
<div class="t ui" style="left:117px;top:1671px"><span style="text-decoration:underline">6</span>: Logcat</div>
<svg style="left:286px;top:1660px" width="28" height="31" viewBox="0 0 28 31"><g fill="#AEB0B2"><path d="M9.5 1.4L14.3 5.8L19.1 1.4" fill="none" stroke="#AEB0B2" stroke-width="3.2"/><ellipse cx="14.4" cy="18.2" rx="8.3" ry="11.8"/><rect x="1.7" y="10.1" width="25.2" height="3"/><rect x="1.7" y="17" width="25.2" height="3"/><rect x="1.7" y="23.7" width="25.2" height="3"/></g></svg>
<div class="t ui" style="left:325px;top:1671px"><span style="text-decoration:underline">5</span>: Đebug</div>
<svg style="left:482px;top:1667px" width="27" height="22" viewBox="0 0 27 22"><g fill="#AEB0B2"><rect x="0" y="0" width="4.5" height="4.5"/><rect x="7" y="0" width="20" height="4.5"/><rect x="0" y="8.5" width="4.5" height="4.5"/><rect x="7" y="8.5" width="20" height="4.5"/><rect x="0" y="17" width="4.5" height="4.5"/><rect x="7" y="17" width="20" height="4.5"/></g></svg>
<div class="t ui" style="left:519px;top:1671px">TOĐO</div>
<svg style="left:626px;top:1662px" width="29" height="26" viewBox="0 0 29 26"><rect width="28.5" height="26" fill="#AEB0B2"/><path d="M5 5L11 10.5L5 16" fill="none" stroke="#3D3E40" stroke-width="2.4"/><rect x="12" y="17.5" width="10" height="2.4" fill="#3D3E40"/></svg>
<div class="t ui" style="left:665px;top:1671px">Terminal</div>
<svg style="left:826px;top:1660px" width="32" height="32" viewBox="0 0 32 32"><g fill="#AEB0B2"><path d="M8.9 6.6L16.7 1.6L21.9 6.6Z"/><path d="M6.7 9.1L1.5 16.9L6.7 21.8Z"/><path d="M8.7 11.1L25.3 27.1L24.7 30.7H14.2L8.7 25.4Z"/><path d="M10.6 8.8H25.3L30.8 14.1V24.6L27.5 25.4Z"/></g></svg>
<div class="t ui" style="left:866px;top:1671px">Đart Analysis</div>
<svg style="left:1984px;top:1660.6px" width="33" height="32" viewBox="0 0 33 32"><path d="M30.5 30H16Q2.5 30 2.5 16Q2.5 2.5 16.5 2.5Q30.5 2.5 30.5 16Z" fill="none" stroke="#AEB0B2" stroke-width="3.2"/></svg>
<div class="t ui" style="left:2026px;top:1671px">Event Log</div>
<svg style="left:15px;top:1713px" width="31" height="31" viewBox="0 0 31 31"><path d="M1.5 6V29.5H25" fill="none" stroke="#AEB0B2" stroke-width="2.4"/><rect x="6.5" y="1.2" width="23.3" height="23.3" fill="none" stroke="#AEB0B2" stroke-width="2.4"/></svg>
<div class="t ui" style="left:1638px;top:1720px">343:20</div>
<div class="t ui" style="left:1743px;top:1720px">LF</div>
<svg style="left:1787px;top:1718.5px" width="13" height="20" viewBox="0 0 13 20"><path d="M0 8H13L6.5 0Z M0 12H13L6.5 20Z" fill="#AEB0B2"/></svg>
<div class="t ui" style="left:1825px;top:1720px">UTF-8</div>
<svg style="left:1908.7px;top:1718.5px" width="13" height="20" viewBox="0 0 13 20"><path d="M0 8H13L6.5 0Z M0 12H13L6.5 20Z" fill="#AEB0B2"/></svg>
<div class="t ui" style="left:1947px;top:1720px">2 spaces</div>
<svg style="left:2070px;top:1718.5px" width="13" height="20" viewBox="0 0 13 20"><path d="M0 8H13L6.5 0Z M0 12H13L6.5 20Z" fill="#AEB0B2"/></svg>
<svg style="left:2112px;top:1711.5px" width="29" height="27" viewBox="0 0 29 27"><path d="M3 12V7Q3 2 8 2Q13 2 13 7" fill="none" stroke="#AEB0B2" stroke-width="3"/><rect x="8" y="12" width="20" height="15" fill="#AEB0B2"/></svg>
<svg style="left:2175px;top:1710px" width="31" height="33" viewBox="0 0 31 33"><g fill="#AEB0B2"><path d="M5.5 13V4.3Q5.5 0.3 9.5 0.3H21.5Q25.5 0.3 25.5 4.3V13Z"/><rect x="0" y="10" width="30" height="3.2"/><path d="M5.5 13V18Q5.5 27.8 15.2 27.8Q25.2 27.8 25.2 20V13Z"/><path d="M1.3 33Q3.5 28.6 10 27.9H20.5Q26.5 28.6 28.7 33Z"/></g><path d="M15.4 13.2H23.7V17.8L25.6 19.4L23.7 21V23Q21 26.1 15.6 26.1Q9.3 26.1 7.6 22.6Z" fill="#3D3E40"/><circle cx="17.5" cy="17.2" r="1.7" fill="#AEB0B2"/><path d="M16 22Q18.7 23.9 22.8 23.2" stroke="#AEB0B2" stroke-width="1.3" fill="none"/></svg>
<!--/BOTTOM-->
<svg width="0" height="0" style="position:absolute"><defs>
<g id="darticon"><path d="M0.6 10.6L10.5 0.6V10.6Z" fill="#87939A"/><path d="M12.9 0H25.4V35.2H0.3V12.9H12.9Z" fill="#87939A"/><path d="M15.6 19L23.9 15.2L35.2 25.3V36.3L32.1 37.3L31.5 40.5H19.8L10.4 29.3Z" fill="#2F3133"/><path d="M17.2 21.1L23.7 17.9L32.8 26.4V34L30.1 34.6L29.5 37.8H20.8L13.2 29Z" fill="#7CB6EA"/><path d="M17.2 21.1L26.8 21L32.8 26.4V34H28.5Z" fill="#5069A0"/><path d="M13.2 29L17.2 21.1V33.4Z" fill="#5A78B5"/></g>
<g id="fluttericon"><path d="M18.1 0H28.9L4.9 24.1L0 18.8Z" fill="#66CDF6"/><path d="M17.5 17.6H28.1L13.7 32.8L8.1 27.3Z" fill="#66CDF6"/><path d="M8.1 27.3L13.5 22L19.2 27.4L13.7 32.8Z" fill="#53B6EE"/><path d="M13.7 32.8L19.2 27.4L28.9 37.5H17.5Z" fill="#265C9E"/></g>
</defs></svg>

</body></html>
